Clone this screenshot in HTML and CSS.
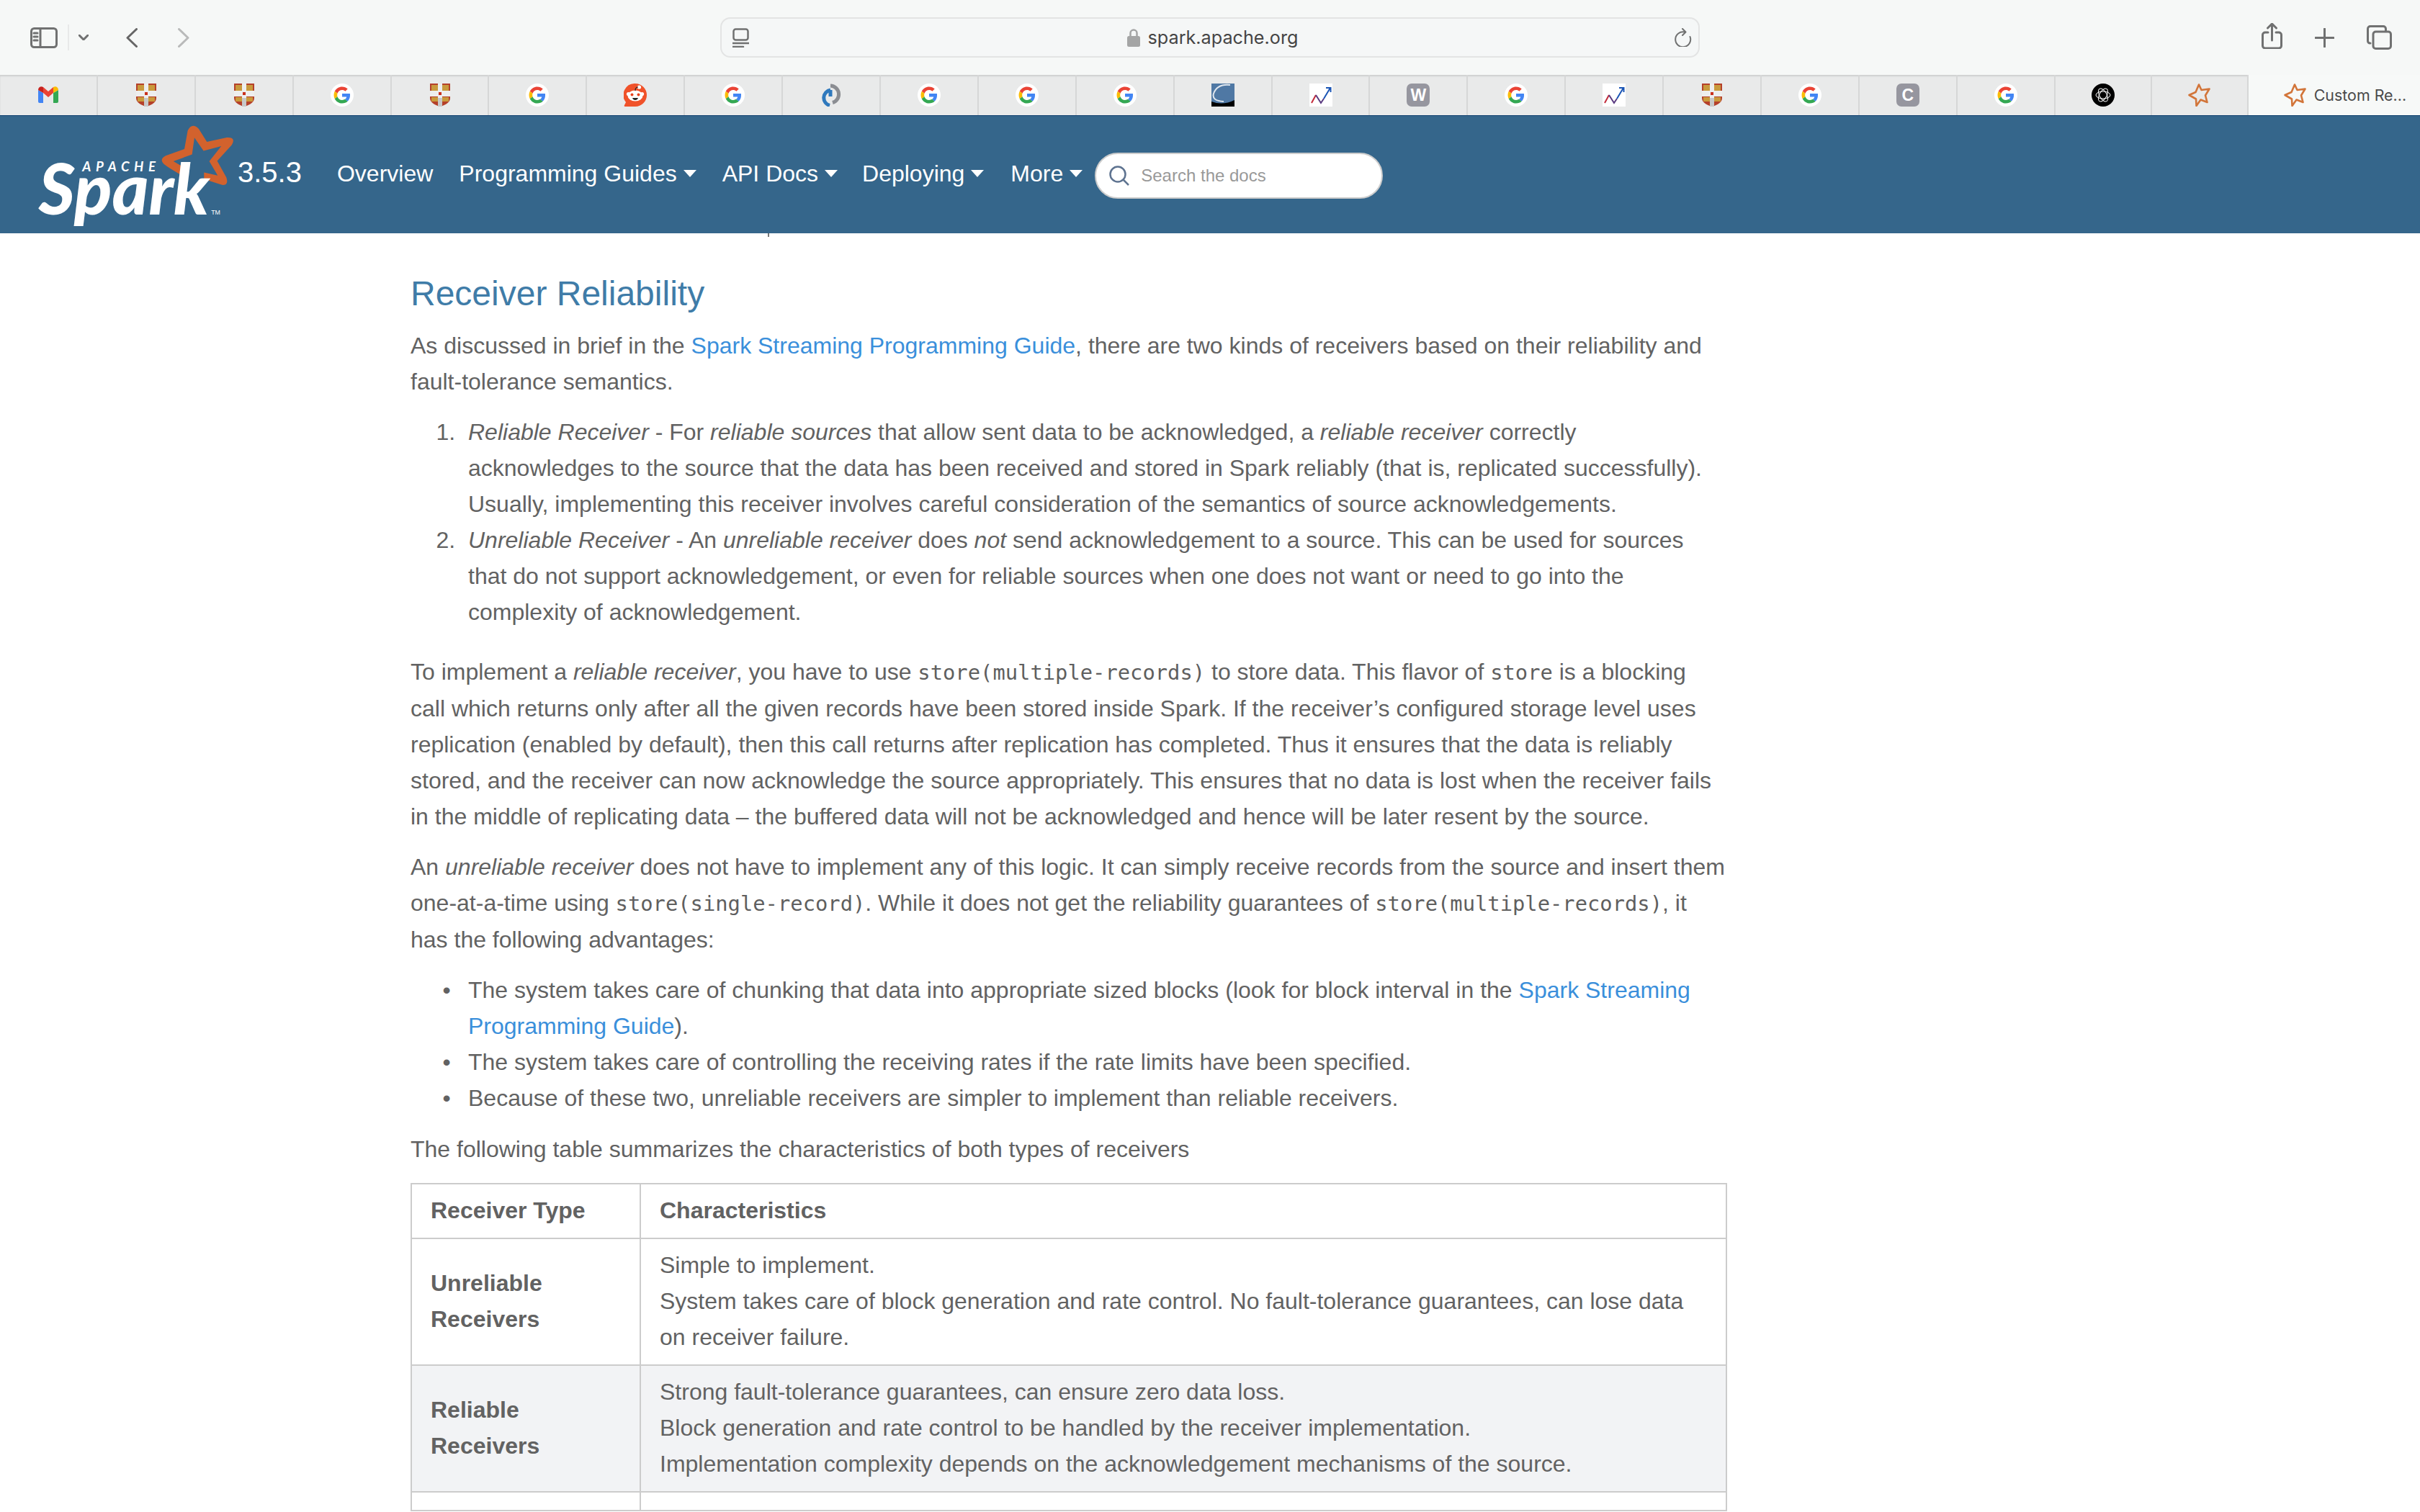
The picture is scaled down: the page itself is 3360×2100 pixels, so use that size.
FILE: index.html
```html
<!DOCTYPE html>
<html lang="en">
<head>
    <meta charset="UTF-8">
    <title>Spark Streaming Custom Receivers</title>
    <link rel="stylesheet" href="styles.css">
</head>
<body>
    <!-- favicons used by the tab strip -->
    <svg class="sprites" xmlns="http://www.w3.org/2000/svg">
        <symbol id="fav-gmail" viewBox="0 0 32 32">
            <path fill="#4285f4" d="M2 9v16a2 2 0 0 0 2 2h5V13z"/>
            <path fill="#34a853" d="M30 9v16a2 2 0 0 1-2 2h-5V13z"/>
            <path fill="#ea4335" d="M9 13v-8l7 6 7-6v8l-7 6z"/>
            <path fill="#c5221f" d="M2 9c0-4 4-6 7-4v8z"/>
            <path fill="#fbbc04" d="M30 9c0-4-4-6-7-4v8z"/>
        </symbol>
        <symbol id="fav-shield" viewBox="0 0 28 32">
            <path fill="#b5402a" d="M0 0h28v20q0 8-14 12Q0 28 0 20z"/>
            <path fill="#c99a3c" d="M2 2h9v8H2zM17 2h9v8h-9zM2 19h9v6H2zM17 19h9v6h-9z"/>
            <path fill="#eee" d="M11 0h6v29h-6zM0 10h28v8H0z"/>
            <path fill="#c8c8c8" d="M11 20h6v12h-6z"/>
            <path fill="#c9301c" d="M12 12h4v4h-4z"/>
        </symbol>
        <symbol id="fav-google" viewBox="0 0 32 32">
            <circle cx="16" cy="16" r="16" fill="#fff"/>
            <g transform="translate(4.5 4.5) scale(.48)">
                <path fill="#ea4335" d="M24 9.5c3.54 0 6.71 1.22 9.21 3.6l6.85-6.85C35.9 2.38 30.47 0 24 0 14.62 0 6.51 5.38 2.56 13.22l7.98 6.19C12.43 13.72 17.74 9.5 24 9.5z"/>
                <path fill="#4285f4" d="M46.98 24.55c0-1.57-.15-3.09-.38-4.55H24v9.02h12.94c-.58 2.96-2.26 5.48-4.78 7.18l7.73 6c4.51-4.18 7.09-10.36 7.09-17.65z"/>
                <path fill="#fbbc05" d="M10.53 28.59c-.48-1.45-.76-2.99-.76-4.59s.27-3.14.76-4.59l-7.98-6.19C.92 16.46 0 20.12 0 24c0 3.88.92 7.54 2.56 10.78l7.97-6.19z"/>
                <path fill="#34a853" d="M24 48c6.48 0 11.93-2.13 15.89-5.81l-7.73-6c-2.15 1.45-4.92 2.3-8.16 2.3-6.26 0-11.57-4.22-13.47-9.91l-7.98 6.19C6.51 42.62 14.62 48 24 48z"/>
            </g>
        </symbol>
        <symbol id="fav-reddit" viewBox="0 0 32 32">
            <path fill="#f0522a" d="M16 0a16 16 0 0 1 0 32H2q-2 0-1-2l2-4A16 16 0 0 1 16 0z"/>
            <ellipse cx="16" cy="17" rx="10.5" ry="7.5" fill="#fff"/>
            <circle cx="6.5" cy="14.5" r="2.6" fill="#fff"/>
            <circle cx="25.5" cy="14.5" r="2.6" fill="#fff"/>
            <circle cx="21.5" cy="5" r="2.6" fill="#fff"/>
            <path fill="none" stroke="#222" stroke-width="1.2" d="M16 10q0-5 4-5"/>
            <circle cx="11.5" cy="15.5" r="2" fill="#e8431f"/>
            <circle cx="20.5" cy="15.5" r="2" fill="#e8431f"/>
            <path fill="#222" d="M12 20h8q-1 3-4 3t-4-3z"/>
        </symbol>
        <symbol id="fav-cycle" viewBox="0 0 32 32">
            <path fill="none" stroke="#8b8d92" stroke-width="5" d="M15 3A12 12 0 0 1 18 26.5"/>
            <path fill="none" stroke="#2f79bd" stroke-width="5" d="M15 9A11 11 0 0 0 14 30.5M15 9v9"/>
        </symbol>
        <symbol id="fav-blue" viewBox="0 0 32 32">
            <path fill="#4f78a4" d="M0 0h32v32H0z"/>
            <path fill="#000" d="M0 32v-7q16 6 32-2v9z"/>
            <path fill="none" stroke="#dfe6ee" stroke-width="2" d="M26 2Q8 0 3 14q-3 10 14 11"/>
        </symbol>
        <symbol id="fav-chart" viewBox="0 0 32 32">
            <path fill="#fff" d="M0 0h32v32H0z"/>
            <g fill="none" stroke-width="2">
                <path stroke="#c22b3a" d="M3 27l6-11"/>
                <path stroke="#5a3a80" d="M9 16l7 11 4-6"/>
                <path stroke="#1a55b5" d="M20 21L29 6M23 6h6.5v6"/>
            </g>
        </symbol>
        <symbol id="fav-openai" viewBox="0 0 32 32">
            <circle cx="16" cy="16" r="16" fill="#000"/>
            <g fill="none" stroke="#fff" stroke-width="1">
                <ellipse cx="16" cy="16" rx="10" ry="5"/>
                <ellipse cx="16" cy="16" rx="10" ry="5" transform="rotate(60 16 16)"/>
                <ellipse cx="16" cy="16" rx="10" ry="5" transform="rotate(120 16 16)"/>
            </g>
        </symbol>
        <symbol id="fav-star" viewBox="0 0 32 32">
            <path fill="none" stroke="#d2753a" stroke-width="2.6" stroke-linejoin="round" d="M15 1.5l3.5 7.500 11-1.500-5.500 9 2.500 9.500-9-3.500-6 8.500-.5-9.500L1.500 16l9-4z"/>
        </symbol>
    </svg>

    <header class="toolbar">
        <div class="tools-left">
            <svg class="ico ico-sidebar" viewBox="0 0 38 29">
                <rect x="1.5" y="1.5" width="35" height="26" rx="4"/>
                <path d="M14 1.5v26M5 8h5M5 13h5M5 18h5"/>
            </svg>
            <div class="tool-sep"></div>
            <svg class="ico ico-chev" viewBox="0 0 14 8"><path d="M1 1l6 6 6-6"/></svg>
            <svg class="ico ico-back" viewBox="0 0 16 27"><path d="M14.5 1.5L2 13.5l12.5 12"/></svg>
            <svg class="ico ico-fwd" viewBox="0 0 16 27"><path d="M1.5 1.5L14 13.5l-12.5 12"/></svg>
        </div>
        <div class="address">
            <svg class="ico ico-reader" viewBox="0 0 23 27">
                <rect x="1.5" y="1.5" width="20" height="15" rx="3"/>
                <path d="M0 21h23M0 26h15"/>
            </svg>
            <div class="url">
                <svg class="lock" viewBox="0 0 18 25">
                    <path fill="none" stroke="#a4a5a5" stroke-width="2.5" d="M4.5 11V6a4.5 4.5 0 0 1 9 0v5"/>
                    <rect y="10" width="18" height="15" rx="2.5" fill="#a4a5a5"/>
                </svg>
                <span>spark.apache.org</span>
            </div>
            <svg class="ico ico-reload" viewBox="0 0 24 26">
                <path d="M14 5.500A10.500 10.500 0 1 0 21.500 12M11 1l4.500 4.500L11 10"/>
            </svg>
        </div>
        <div class="tools-right">
            <svg class="ico ico-share" viewBox="0 0 29 36">
                <path d="M9 13H5a3.500 3.500 0 0 0-3.500 3.500v15A3.500 3.500 0 0 0 5 35h19a3.500 3.500 0 0 0 3.500-3.500v-15A3.500 3.500 0 0 0 24 13h-4M14.500 24V2M8.500 7l6-6 6 6"/>
            </svg>
            <svg class="ico ico-plus" viewBox="0 0 27 27"><path d="M13.5 1v25M1 13.5h25"/></svg>
            <svg class="ico ico-tabs" viewBox="0 0 35 34">
                <path d="M5 25h-.5A3 3 0 0 1 1.500 22V5a3.500 3.500 0 0 1 3.500-3.500h18A3.500 3.500 0 0 1 26.500 5v3"/>
                <rect x="9" y="9" width="24.5" height="23.5" rx="3.5"/>
            </svg>
        </div>
    </header>

    <nav class="tab-strip">
        <div class="tab-list">
            <div class="tab"><svg class="fav"><use href="#fav-gmail"/></svg></div>
            <div class="tab"><svg class="fav"><use href="#fav-shield"/></svg></div>
            <div class="tab"><svg class="fav"><use href="#fav-shield"/></svg></div>
            <div class="tab"><svg class="fav"><use href="#fav-google"/></svg></div>
            <div class="tab"><svg class="fav"><use href="#fav-shield"/></svg></div>
            <div class="tab"><svg class="fav"><use href="#fav-google"/></svg></div>
            <div class="tab"><svg class="fav"><use href="#fav-reddit"/></svg></div>
            <div class="tab"><svg class="fav"><use href="#fav-google"/></svg></div>
            <div class="tab"><svg class="fav"><use href="#fav-cycle"/></svg></div>
            <div class="tab"><svg class="fav"><use href="#fav-google"/></svg></div>
            <div class="tab"><svg class="fav"><use href="#fav-google"/></svg></div>
            <div class="tab"><svg class="fav"><use href="#fav-google"/></svg></div>
            <div class="tab"><svg class="fav"><use href="#fav-blue"/></svg></div>
            <div class="tab"><svg class="fav"><use href="#fav-chart"/></svg></div>
            <div class="tab"><div class="letter-tile">W</div></div>
            <div class="tab"><svg class="fav"><use href="#fav-google"/></svg></div>
            <div class="tab"><svg class="fav"><use href="#fav-chart"/></svg></div>
            <div class="tab"><svg class="fav"><use href="#fav-shield"/></svg></div>
            <div class="tab"><svg class="fav"><use href="#fav-google"/></svg></div>
            <div class="tab"><div class="letter-tile">C</div></div>
            <div class="tab"><svg class="fav"><use href="#fav-google"/></svg></div>
            <div class="tab tab-narrow"><svg class="fav"><use href="#fav-openai"/></svg></div>
            <div class="tab tab-narrow"><svg class="fav"><use href="#fav-star"/></svg></div>
        </div>
        <div class="tab-active">
            <svg class="fav"><use href="#fav-star"/></svg>
            <span>Custom Re...</span>
        </div>
    </nav>

    <div class="navbar">
        <svg class="spark-logo" viewBox="150 250 830 430">
            <path fill="#d2622d" d="M782 275Q800 240 828 268L862 322 945 304Q985 302 966 335L905 402 943 470Q955 505 925 502L850 478 850 450 907 463 872 403 922 340 848 360 810 305 800 375 722 403 765 428 790 425 750 458Q700 430 682 415 662 395 690 380L768 352Z"/>
            <text class="logo-apache" x="342" y="445" textLength="306" lengthAdjust="spacing">APACHE</text>
            <text class="logo-spark" x="160" y="625" textLength="712" lengthAdjust="spacingAndGlyphs">Spark</text>
            <text class="logo-tm" x="880" y="626" textLength="38" lengthAdjust="spacingAndGlyphs">TM</text>
        </svg>
        <div class="version">3.5.3</div>
        <a class="nav-link nav-overview">Overview</a>
        <a class="nav-link nav-guides caret">Programming Guides</a>
        <a class="nav-link nav-api caret">API Docs</a>
        <a class="nav-link nav-deploy caret">Deploying</a>
        <a class="nav-link nav-more caret">More</a>
        <div class="search">
            <svg class="search-icon" viewBox="0 0 28 28">
                <circle cx="12" cy="12" r="10.5"/>
                <path d="M19.5 19.5L27 27"/>
            </svg>
            <input class="search-input" type="text" placeholder="Search the docs">
        </div>
    </div>

    <main class="content">
        <div class="cut-line"></div>
        <h2>Receiver Reliability</h2>
        <p>As discussed in brief in the <a>Spark Streaming Programming Guide</a>, there are two kinds of receivers based on their reliability and fault-tolerance semantics.</p>
        <ol>
            <li><em>Reliable Receiver</em> - For <em>reliable sources</em> that allow sent data to be acknowledged, a <em>reliable receiver</em> correctly acknowledges to the source that the data has been received and stored in Spark reliably (that is, replicated successfully). Usually, implementing this receiver involves careful consideration of the semantics of source acknowledgements.</li>
            <li><em>Unreliable Receiver</em> - An <em>unreliable receiver</em> does <em>not</em> send acknowledgement to a source. This can be used for sources that do not support acknowledgement, or even for reliable sources when one does not want or need to go into the complexity of acknowledgement.</li>
        </ol>
        <p>To implement a <em>reliable receiver</em>, you have to use <code>store(multiple-records)</code> to store data. This flavor of <code>store</code> is a blocking call which returns only after all the given records have been stored inside Spark. If the receiver’s configured storage level uses replication (enabled by default), then this call returns after replication has completed. Thus it ensures that the data is reliably stored, and the receiver can now acknowledge the source appropriately. This ensures that no data is lost when the receiver fails in the middle of replicating data – the buffered data will not be acknowledged and hence will be later resent by the source.</p>
        <p>An <em>unreliable receiver</em> does not have to implement any of this logic. It can simply receive records from the source and insert them one-at-a-time using <code>store(single-record)</code>. While it does not get the reliability guarantees of <code>store(multiple-records)</code>, it has the following advantages:</p>
        <ul>
            <li>The system takes care of chunking that data into appropriate sized blocks (look for block interval in the <a>Spark Streaming Programming Guide</a>).</li>
            <li>The system takes care of controlling the receiving rates if the rate limits have been specified.</li>
            <li>Because of these two, unreliable receivers are simpler to implement than reliable receivers.</li>
        </ul>
        <p>The following table summarizes the characteristics of both types of receivers</p>
        <table>
            <thead>
                <tr><th>Receiver Type</th><th>Characteristics</th></tr>
            </thead>
            <tbody>
                <tr>
                    <td><b>Unreliable Receivers</b></td>
                    <td>Simple to implement.<br>System takes care of block generation and rate control. No fault-tolerance guarantees, can lose data on receiver failure.</td>
                </tr>
                <tr>
                    <td><b>Reliable Receivers</b></td>
                    <td>Strong fault-tolerance guarantees, can ensure zero data loss.<br>Block generation and rate control to be handled by the receiver implementation.<br>Implementation complexity depends on the acknowledgement mechanisms of the source.</td>
                </tr>
                <tr class="empty-row"><td></td><td></td></tr>
            </tbody>
        </table>
    </main>
</body>
</html>
```

FILE: styles.css
```css
html, body {
    margin: 0;
    padding: 0;
    height: 2100px;
    overflow: hidden;
    background-color: #fff;
    font-family: "Liberation Sans", Arial, sans-serif;
}

.sprites {
    display: none;
}

/* Safari toolbar */
.toolbar {
    display: flex;
    align-items: center;
    height: 104px;
    background-color: #f6f8f7;
}

.tools-left {
    display: flex;
    align-items: center;
    width: 1000px;
    height: 56px;
    padding-left: 42px;
    box-sizing: border-box;
}

.ico {
    fill: none;
    stroke: #707171;
    stroke-width: 3;
    stroke-linecap: round;
    stroke-linejoin: round;
    flex: none;
}

.ico-sidebar {
    width: 38px;
    height: 29px;
}

.tool-sep {
    width: 2px;
    height: 36px;
    margin-left: 14px;
    background-color: #e8e9e9;
}

.ico-chev {
    width: 14px;
    height: 8px;
    margin-left: 13px;
}

.ico-back {
    width: 16px;
    height: 27px;
    margin-left: 52px;
    stroke: #666;
}

.ico-fwd {
    width: 16px;
    height: 27px;
    margin-left: 56px;
    stroke: #b9baba;
}

.address {
    display: flex;
    align-items: center;
    justify-content: space-between;
    width: 1360px;
    height: 56px;
    padding: 0 9px 0 15px;
    box-sizing: border-box;
    border: 2px solid #e3e4e4;
    border-radius: 14px;
    background-color: #f5f7f7;
}

.ico-reader {
    width: 23px;
    height: 27px;
    stroke-width: 2.5;
}

.ico-reload {
    width: 24px;
    height: 26px;
    stroke-width: 2;
}

.url {
    display: flex;
    align-items: center;
    gap: 11px;
    margin-left: 2px;
    color: #454545;
    font-family: Inter, "Liberation Sans", sans-serif;
    font-size: 25.2px;
}

.lock {
    width: 18px;
    height: 25px;
}

.tools-right {
    display: flex;
    align-items: center;
    padding-left: 780px;
    flex: none;
    width: 1000px;
    box-sizing: border-box;
}

.ico-share {
    width: 29px;
    height: 36px;
    margin-top: -4px;
}

.ico-plus {
    width: 27px;
    height: 27px;
    margin-left: 45px;
}

.ico-tabs {
    width: 35px;
    height: 34px;
    margin-left: 45px;
}

/* tab strip */
.tab-strip {
    display: flex;
    height: 56px;
    border-bottom: 2px solid #0f3f6e;
    margin-bottom: -1px;
}

.tab-list {
    display: flex;
    box-shadow: inset 0 2px 2px #cfd0d0;
    background-color: #e9eaea;
}

.tab {
    display: flex;
    align-items: center;
    justify-content: center;
    flex: none;
    width: 135.9px;
    box-sizing: border-box;
    border-right: 2px solid #d6d7d7;
}

.tab-narrow {
    width: 134px;
}

.fav {
    width: 32px;
    height: 32px;
    flex: none;
}

.letter-tile {
    width: 32px;
    height: 32px;
    border-radius: 7px;
    background-color: #96969f;
    color: #fff;
    font-size: 23px;
    font-weight: bold;
    line-height: 32px;
    text-align: center;
}

.tab-active {
    flex: 1;
    display: flex;
    align-items: center;
    gap: 10px;
    padding-left: 49px;
    background-color: #f7f9f8;
    color: #4a4a4a;
    font-family: Inter, "Liberation Sans", sans-serif;
    font-size: 21.4px;
}

/* docs navbar */
.navbar {
    display: flex;
    align-items: center;
    height: 163px;
    background-color: #35668b;
    color: #fff;
}

.spark-logo {
    width: 277px;
    height: 143px;
    margin-left: 50px;
    margin-top: 4px;
    flex: none;
    overflow: visible;
}

.logo-apache {
    fill: #fff;
    font-family: Lato, sans-serif;
    font-size: 56px;
    font-style: italic;
    font-weight: 700;
}

.logo-spark {
    fill: #fff;
    font-family: Lato, sans-serif;
    font-size: 290px;
    font-style: italic;
    font-weight: 900;
}

.logo-tm {
    fill: #fff;
    font-family: "Liberation Sans", sans-serif;
    font-size: 26px;
}

.version {
    margin-left: 3px;
    margin-top: -7px;
    font-size: 40px;
}

.nav-link {
    font-size: 32px;
    color: #fff;
    white-space: nowrap;
    margin-top: -3px;
}

.nav-overview {
    margin-left: 49px;
}

.nav-guides {
    margin-left: 36px;
}

.nav-api {
    margin-left: 36px;
}

.nav-deploy {
    margin-left: 34px;
}

.nav-more {
    margin-left: 37px;
}

.caret::after {
    content: "";
    display: inline-block;
    margin-left: 9px;
    vertical-align: 6px;
    border-top: 10px solid #fff;
    border-left: 9px solid transparent;
    border-right: 9px solid transparent;
}

.search {
    display: flex;
    align-items: center;
    gap: 16px;
    width: 400px;
    height: 64px;
    margin-left: 17px;
    margin-top: 2px;
    padding-left: 18px;
    box-sizing: border-box;
    border: 2px solid #ccc;
    border-radius: 32px;
    background-color: #fff;
}

.search-icon {
    width: 28px;
    height: 28px;
    fill: none;
    stroke: #5e7390;
    stroke-width: 2.5;
    flex: none;
}

.search-input {
    width: 320px;
    border: none;
    outline: none;
    padding: 0;
    background: transparent;
    font-family: "Liberation Sans", sans-serif;
    font-size: 24px;
}

.search-input::placeholder {
    color: #999;
}

/* page content */
.content {
    width: 1828px;
    margin-left: 570px;
    color: #626262;
    font-size: 32px;
    line-height: 50px;
}

.cut-line {
    width: 2px;
    height: 5px;
    margin-left: 496px;
    background-color: #777;
}

h2 {
    margin: 51px 0 19px;
    color: #3f7ca8;
    font-size: 48px;
    font-weight: normal;
    line-height: 56px;
}

p {
    max-width: 1826px;
    margin: 0 0 20px;
}

ol, ul {
    margin: 0 0 21px;
    padding-left: 80px;
}

ol {
    margin-bottom: 33px;
}

ol li::marker {
    content: counter(list-item) ".\00a0\00a0";
}

ul li::marker {
    content: "•\00a0\00a0\2009";
}

a {
    color: #3a8fdb;
}

code {
    color: #5f5f5f;
    font-family: "DejaVu Sans Mono", monospace;
    font-size: 28.8px;
}

table {
    width: 100%;
    margin-top: 22px;
    border-collapse: collapse;
    table-layout: fixed;
}

th, td {
    padding: 11px 26px 13px;
    border: 2px solid #ccc;
    text-align: left;
    vertical-align: middle;
}

th:first-child, td:first-child {
    width: 264px;
}

tbody tr:nth-child(even) {
    background-color: #f2f3f5;
}

.empty-row td {
    height: 24px;
    padding: 0;
}
```
